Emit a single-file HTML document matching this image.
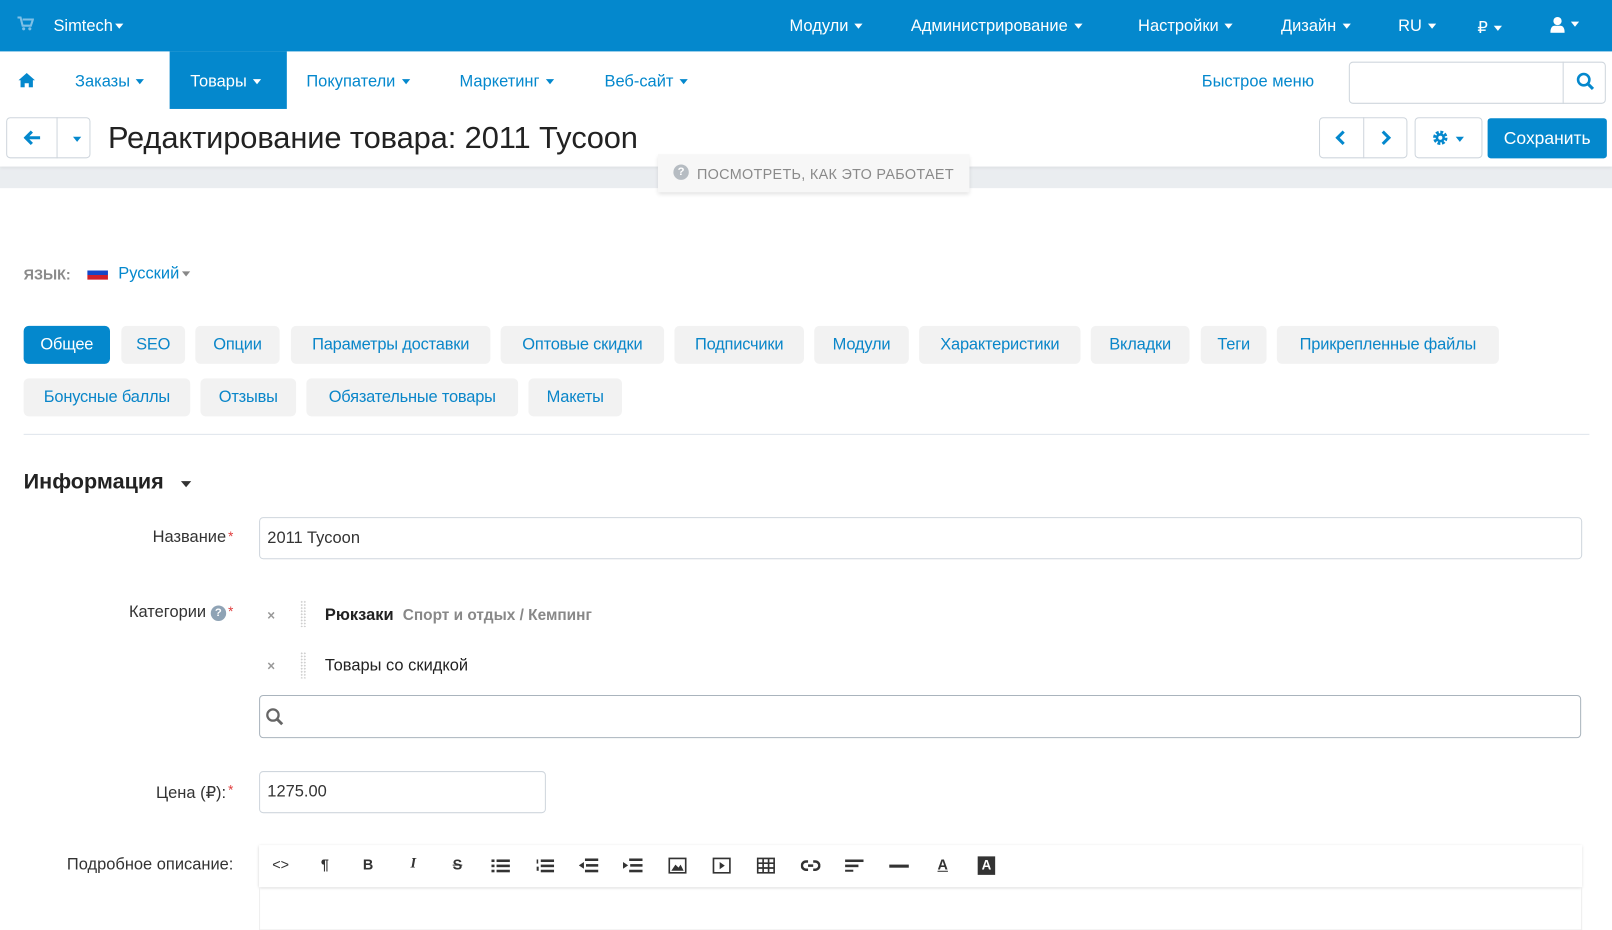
<!DOCTYPE html>
<html><head><meta charset="utf-8"><style>
*{box-sizing:border-box;margin:0;padding:0}
body{width:1612px;height:905px;overflow:hidden;background:#fff;font-family:"Liberation Sans",sans-serif;color:#333;position:relative}
#w{position:absolute;left:0;top:0;width:1568px;height:881px;transform:scale(1.02806);transform-origin:0 0}
.a{position:absolute;white-space:nowrap}
.car{display:inline-block;width:0;height:0;border-left:4.5px solid transparent;border-right:4.5px solid transparent;border-top:5px solid currentColor;vertical-align:middle;margin-left:6px}
.top{left:0;top:0;width:1568px;height:50px;background:#0488cd}
.tn{color:#fff;font-size:16px;top:17px}
.nav{color:#0488cd;font-size:16px;top:71px}
.tab{position:absolute;height:37px;background:#f2f2f2;border-radius:5px;color:#0a86c9;font-size:16px;line-height:38px;text-align:center;letter-spacing:-.2px}
.lbl{font-size:16px;color:#333;text-align:right;width:200px;left:27px}
.req{color:#e03c3c;font-size:13px;vertical-align:top;margin-left:2px}
.inp{position:absolute;border:1px solid #cfd6dd;border-radius:4px;background:#fff}
.tb{position:absolute;top:833px;font-size:14px;font-weight:bold;color:#333;width:24px;text-align:center}
</style></head><body><div id="w">
<div class="a top"></div>
<svg class="a" style="left:17px;top:16px" width="16" height="14" viewBox="0 0 16 14"><path d="M0 1h3l2 8h8l2-6H5" fill="none" stroke="#7fc0e6" stroke-width="2"/><circle cx="6" cy="12" r="1.5" fill="#7fc0e6"/><circle cx="12" cy="12" r="1.5" fill="#7fc0e6"/></svg>
<div class="a tn" style="left:52px">Simtech<span class="car" style="margin-left:2px"></span></div>
<div class="a tn" style="left:768px">Модули<span class="car"></span></div>
<div class="a tn" style="left:886px">Администрирование<span class="car"></span></div>
<div class="a tn" style="left:1107px">Настройки<span class="car"></span></div>
<div class="a tn" style="left:1246px">Дизайн<span class="car"></span></div>
<div class="a tn" style="left:1360px">RU<span class="car"></span></div>
<div class="a tn" style="left:1437px">₽<span class="car"></span></div>
<svg class="a" style="left:1508px;top:16px" width="14" height="16" viewBox="0 0 14 16"><circle cx="7" cy="4.5" r="4" fill="#fff"/><path d="M0 16c0-5 2-7 4-7h6c2 0 4 2 4 7z" fill="#fff"/></svg>
<div class="a tn" style="left:1522px;top:15px"><span class="car"></span></div>

<div class="a" style="left:165px;top:50px;width:114px;height:56px;background:#0488cd"></div>
<svg class="a" style="left:17px;top:70px" width="18" height="15" viewBox="0 0 18 15"><path d="M9 1L1 8h2v7h4v-4h4v4h4V8h2z" fill="#0488cd"/></svg>
<div class="a nav" style="left:73px">Заказы<span class="car"></span></div>
<div class="a nav" style="left:185px;color:#fff">Товары<span class="car"></span></div>
<div class="a nav" style="left:298px">Покупатели<span class="car"></span></div>
<div class="a nav" style="left:447px">Маркетинг<span class="car"></span></div>
<div class="a nav" style="left:588px">Веб-сайт<span class="car"></span></div>
<div class="a nav" style="left:1169px">Быстрое меню</div>
<div class="inp" style="left:1312px;top:60px;width:250px;height:41px"></div>
<div class="a" style="left:1520px;top:60px;width:1px;height:41px;background:#cfd6dd"></div>
<svg class="a" style="left:1533px;top:70px" width="18" height="18" viewBox="0 0 18 18"><circle cx="7.5" cy="7.5" r="5.5" fill="none" stroke="#0488cd" stroke-width="2.5"/><path d="M11.5 11.5l5 5" stroke="#0488cd" stroke-width="3"/></svg>

<div class="a" style="left:0;top:162px;width:1568px;height:21px;background:#eaedf0"></div>
<div class="a" style="left:0;top:106px;width:1568px;height:56px;background:#fff;box-shadow:0 2px 3px rgba(0,0,0,.06)"></div>
<div class="inp" style="left:6px;top:114px;width:82px;height:40px"></div>
<div class="a" style="left:55px;top:114px;width:1px;height:40px;background:#cfd6dd"></div>
<svg class="a" style="left:23px;top:126px" width="17" height="16" viewBox="0 0 17 16"><path d="M8 2L2 8l6 6M2 8h14" fill="none" stroke="#0488cd" stroke-width="3"/></svg>
<div class="a" style="left:65px;top:127px;color:#0488cd"><span class="car"></span></div>
<div class="a" style="left:105px;top:118px;font-size:30px;color:#222;letter-spacing:-.1px">Редактирование товара: 2011 Tycoon</div>
<div class="inp" style="left:1283px;top:114px;width:86px;height:40px"></div>
<div class="a" style="left:1326px;top:114px;width:1px;height:40px;background:#cfd6dd"></div>
<svg class="a" style="left:1298px;top:126px" width="12" height="16" viewBox="0 0 12 16"><path d="M9 2L3 8l6 6" fill="none" stroke="#0488cd" stroke-width="3"/></svg>
<svg class="a" style="left:1342px;top:126px" width="12" height="16" viewBox="0 0 12 16"><path d="M3 2l6 6-6 6" fill="none" stroke="#0488cd" stroke-width="3"/></svg>
<div class="inp" style="left:1376px;top:114px;width:66px;height:40px"></div>
<svg class="a" style="left:1393px;top:126px" width="16" height="16" viewBox="0 0 16 16"><circle cx="8" cy="8" r="5" fill="none" stroke="#0488cd" stroke-width="4" stroke-dasharray="2.5 1.4"/><circle cx="8" cy="8" r="4.5" fill="#0488cd"/><circle cx="8" cy="8" r="2" fill="#fff"/></svg>
<div class="a" style="left:1410px;top:127px;color:#0488cd"><span class="car"></span></div>
<div class="a" style="left:1447px;top:115px;width:116px;height:39px;background:#0488cd;border-radius:3px;color:#fff;font-size:17px;line-height:40px;text-align:center">Сохранить</div>

<div class="a" style="left:640px;top:150px;width:303px;height:37px;background:#f7f7f7;box-shadow:0 2px 4px rgba(0,0,0,.12)"></div>
<div class="a" style="left:655px;top:160px;width:15px;height:15px;border-radius:50%;background:#b6bcc2;color:#fff;font-size:11px;font-weight:bold;text-align:center;line-height:15px">?</div>
<div class="a" style="left:678px;top:161px;font-size:14px;color:#8a8a8a;letter-spacing:.3px">ПОСМОТРЕТЬ, КАК ЭТО РАБОТАЕТ</div>

<div class="a" style="left:23px;top:259px;font-size:14px;color:#8a8a8a;font-weight:bold">ЯЗЫК:</div>
<div class="a" style="left:85px;top:259px;width:20px;height:13px;background:linear-gradient(#fff 0 33%,#1447c8 33% 66%,#d0202a 66%)"></div>
<div class="a" style="left:115px;top:258px;font-size:16px;color:#0488cd">Русский<span class="car" style="color:#888;margin-left:3px"></span></div>

<div class="tab" style="left:23px;top:317px;width:84px;background:#0488cd;color:#fff">Общее</div>
<div class="tab" style="left:118px;top:317px;width:62px">SEO</div>
<div class="tab" style="left:190px;top:317px;width:82px">Опции</div>
<div class="tab" style="left:283px;top:317px;width:194px">Параметры доставки</div>
<div class="tab" style="left:487px;top:317px;width:159px">Оптовые скидки</div>
<div class="tab" style="left:656px;top:317px;width:126px">Подписчики</div>
<div class="tab" style="left:792px;top:317px;width:92px">Модули</div>
<div class="tab" style="left:894px;top:317px;width:157px">Характеристики</div>
<div class="tab" style="left:1061px;top:317px;width:96px">Вкладки</div>
<div class="tab" style="left:1168px;top:317px;width:64px">Теги</div>
<div class="tab" style="left:1242px;top:317px;width:216px">Прикрепленные файлы</div>
<div class="tab" style="left:23px;top:368px;width:162px">Бонусные баллы</div>
<div class="tab" style="left:195px;top:368px;width:93px">Отзывы</div>
<div class="tab" style="left:298px;top:368px;width:206px">Обязательные товары</div>
<div class="tab" style="left:514px;top:368px;width:91px">Макеты</div>
<div class="a" style="left:23px;top:422px;width:1523px;height:1px;background:#dfe5eb"></div>

<div class="a" style="left:23px;top:457px;font-size:21px;font-weight:bold;color:#222">Информация</div>
<div class="a" style="left:170px;top:462px;color:#333"><span class="car" style="border-left-width:5.5px;border-right-width:5.5px;border-top-width:6px"></span></div>

<div class="a lbl" style="top:514px">Название<span class="req">*</span></div>
<div class="inp" style="left:252px;top:503px;width:1287px;height:41px"></div>
<div class="a" style="left:260px;top:515px;font-size:16px;color:#333">2011 Tycoon</div>

<div class="a lbl" style="top:587px">Категории <span style="display:inline-block;width:15px;height:15px;border-radius:50%;background:#8fa3b5;color:#fff;font-size:11px;font-weight:bold;text-align:center;line-height:15px;vertical-align:1px">?</span><span class="req">*</span></div>
<div class="a" style="left:260px;top:591px;font-size:13px;color:#999;font-weight:bold">×</div>
<div class="a" style="left:292px;top:584px;width:6px;height:26px;background-image:radial-gradient(#ccc 40%,transparent 45%);background-size:3px 3px"></div>
<div class="a" style="left:316px;top:590px;font-size:16px"><b style="color:#222">Рюкзаки</b> &nbsp;<b style="color:#888;font-size:15px">Спорт и отдых / Кемпинг</b></div>
<div class="a" style="left:260px;top:640px;font-size:13px;color:#999;font-weight:bold">×</div>
<div class="a" style="left:292px;top:634px;width:6px;height:26px;background-image:radial-gradient(#ccc 40%,transparent 45%);background-size:3px 3px"></div>
<div class="a" style="left:316px;top:639px;font-size:16px;color:#222">Товары со скидкой</div>
<div class="inp" style="left:252px;top:676px;width:1286px;height:42px;border-color:#aab4bd"></div>
<svg class="a" style="left:258px;top:688px" width="18" height="18" viewBox="0 0 18 18"><circle cx="7.5" cy="7.5" r="5.5" fill="none" stroke="#666" stroke-width="2.2"/><path d="M11.5 11.5l5 5" stroke="#666" stroke-width="2.8"/></svg>

<div class="a lbl" style="top:761px">Цена (₽):<span class="req">*</span></div>
<div class="inp" style="left:252px;top:750px;width:279px;height:41px"></div>
<div class="a" style="left:260px;top:762px;font-size:16px;color:#333">1275.00</div>

<div class="a lbl" style="top:833px">Подробное описание:</div>
<div class="a" style="left:252px;top:822px;width:1287px;height:41px;background:#fff;box-shadow:0 1px 3px rgba(0,0,0,.2)"></div>
<div class="a" style="left:252px;top:863px;width:1287px;height:42px;border:1px solid #eee;border-top:none"></div>
<div class="tb" style="left:261px;font-weight:normal">&lt;&gt;</div>
<div class="tb" style="left:304px">¶</div>
<div class="tb" style="left:346px">B</div>
<div class="tb" style="left:390px;font-style:italic;font-family:'Liberation Serif',serif">I</div>
<div class="tb" style="left:433px;text-decoration:line-through">S</div>
<svg class="a" style="left:478px;top:835px" width="18" height="14"><g fill="#333"><rect x="0" y="1" width="3" height="2.5"/><rect x="5" y="1" width="13" height="2.5"/><rect x="0" y="6" width="3" height="2.5"/><rect x="5" y="6" width="13" height="2.5"/><rect x="0" y="11" width="3" height="2.5"/><rect x="5" y="11" width="13" height="2.5"/></g></svg>
<svg class="a" style="left:521px;top:835px" width="18" height="14"><g fill="#333"><rect x="5" y="1" width="13" height="2.5"/><rect x="5" y="6" width="13" height="2.5"/><rect x="5" y="11" width="13" height="2.5"/><rect x="1" y="1" width="1.5" height="4"/><rect x="1" y="8" width="2" height="4"/></g></svg>
<svg class="a" style="left:563px;top:835px" width="19" height="14"><g fill="#333"><rect x="6" y="0" width="13" height="2.5"/><rect x="7" y="5.5" width="12" height="2.5"/><rect x="6" y="11" width="13" height="2.5"/><path d="M0 6.7L5 3.5v6.5z"/></g></svg>
<svg class="a" style="left:606px;top:835px" width="19" height="14"><g fill="#333"><rect x="6" y="0" width="13" height="2.5"/><rect x="7" y="5.5" width="12" height="2.5"/><rect x="6" y="11" width="13" height="2.5"/><path d="M5 6.7L0 3.5v6.5z"/></g></svg>
<svg class="a" style="left:650px;top:834px" width="18" height="16"><rect x="1" y="1" width="16" height="14" fill="none" stroke="#333" stroke-width="1.6"/><path d="M3 13l4-6 3 3 2-3 3 6z" fill="#333"/></svg>
<svg class="a" style="left:693px;top:834px" width="18" height="16"><rect x="1" y="1" width="16" height="14" fill="none" stroke="#333" stroke-width="1.6"/><path d="M7 4.5v7l5-3.5z" fill="#333"/></svg>
<svg class="a" style="left:736px;top:834px" width="18" height="16"><g fill="none" stroke="#333" stroke-width="1.6"><rect x="1" y="1" width="16" height="14"/><path d="M6.3 1v14M11.6 1v14M1 5.6h16M1 10.3h16"/></g></svg>
<svg class="a" style="left:779px;top:835px" width="19" height="14"><g fill="none" stroke="#333" stroke-width="2.4"><path d="M7 3H5a4 4 0 000 8h2M12 3h2a4 4 0 010 8h-2M7 7h5"/></g></svg>
<svg class="a" style="left:822px;top:836px" width="18" height="12"><g fill="#333"><rect width="18" height="2.5"/><rect y="5" width="13" height="2.5"/><rect y="10" width="8" height="2.5"/></g></svg>
<div class="a" style="left:865px;top:841px;width:19px;height:3px;background:#333"></div>
<div class="tb" style="left:905px;text-decoration:underline">A</div>
<div class="a" style="left:951px;top:833px;width:17px;height:18px;background:#333;color:#fff;font-size:13px;font-weight:bold;text-align:center;line-height:18px">A</div>
</div></body></html>
